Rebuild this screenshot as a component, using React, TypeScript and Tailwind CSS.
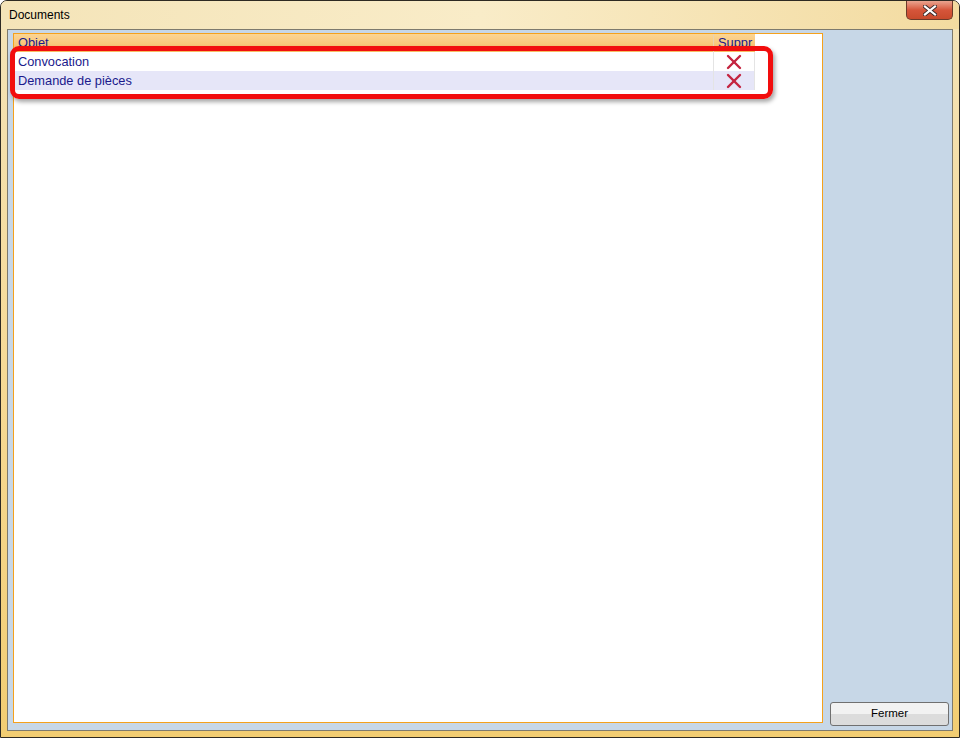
import { X } from "lucide-react"

const rows = [
    { label: "Convocation", bg: "bg-white" },
    { label: "Demande de pièces", bg: "bg-[#e6e6f8]" },
]

const CloseGlyph = () => (
    <svg width="14" height="11" viewBox="0 0 14 11">
        <path d="M2 1.5 L12 9.5 M12 1.5 L2 9.5" stroke="#3a2a2a" strokeWidth="4" strokeLinecap="square" />
        <path d="M2 1.5 L12 9.5 M12 1.5 L2 9.5" stroke="#ffffff" strokeWidth="2.2" strokeLinecap="square" />
    </svg>
)

export default function App() {
    return (
        <div className="w-[960px] h-[738px] relative overflow-hidden rounded-tl-[7px] rounded-tr-[7px] border border-[#2e2a22] bg-gradient-to-b from-[#f3e3b8] via-[#f6da96] to-[#f2cd72] flex flex-col font-['Liberation_Sans',Arial,sans-serif]">
            <div className="h-[28px] shrink-0 flex items-center pl-2 bg-gradient-to-r from-[#f4e4b8] via-[#f9ecc8] to-[#f3dba0]">
                <span className="text-[12px] text-black -mt-[1px]">Documents</span>
            </div>
            <div className="absolute right-[6px] top-0 w-[47px] h-[19px] rounded-b-[5px] border border-t-0 border-[#6b3a2a] bg-gradient-to-b from-[#e9a48f] via-[#d5553a] to-[#c84a2c] flex items-center justify-center">
                <CloseGlyph />
            </div>

            <div className="flex-1 mx-[6px] mb-[6px] border border-[#7d7a6e] bg-[#c7d7e7] flex">
                <div className="ml-[5px] mt-[3px] mb-[7px] w-[810px] border border-[#f5a11c] bg-white flex flex-col">
                    <div className="flex w-[741px] h-[18px] text-[12.8px] text-[#1a1a8c]">
                        <div className="w-[700px] pl-[4px] flex items-center bg-gradient-to-b from-[#fbd594] to-[#f6bc63] border-r border-[#e9d2b0]">Objet</div>
                        <div className="w-[41px] pl-[4px] flex items-center bg-gradient-to-b from-[#fbd594] to-[#f6bc63]">Suppr</div>
                    </div>
                    {rows.map((r) => (
                        <div key={r.label} className={`flex w-[741px] h-[19px] text-[12.8px] text-[#1a1a8c] ${r.bg}`}>
                            <div className="w-[700px] pl-[4px] flex items-center border-r border-[#e4e4e4]">{r.label}</div>
                            <div className="w-[41px] flex items-center justify-center border-r border-[#e4e4e4]">
                                <X size={24} strokeWidth={2.4} className="text-[#c42440] shrink-0 -my-[4px]" />
                            </div>
                        </div>
                    ))}
                </div>
                <div className="flex-1 flex flex-col justify-end pl-[7px] pr-[3px] pb-[4px]">
                    <button className="h-[24px] w-full rounded-[3px] border border-[#707070] bg-gradient-to-b from-[#f2f2f2] from-50% to-[#dcdcdc] to-50% text-[11.5px] text-black">
                        Fermer
                    </button>
                </div>
            </div>

            <div className="absolute left-[9px] top-[45px] w-[763px] h-[53px] rounded-[9px] border-[5px] border-[#f20d0d] shadow-[2px_3px_4px_rgba(0,0,0,0.35)]" />
        </div>
    )
}
